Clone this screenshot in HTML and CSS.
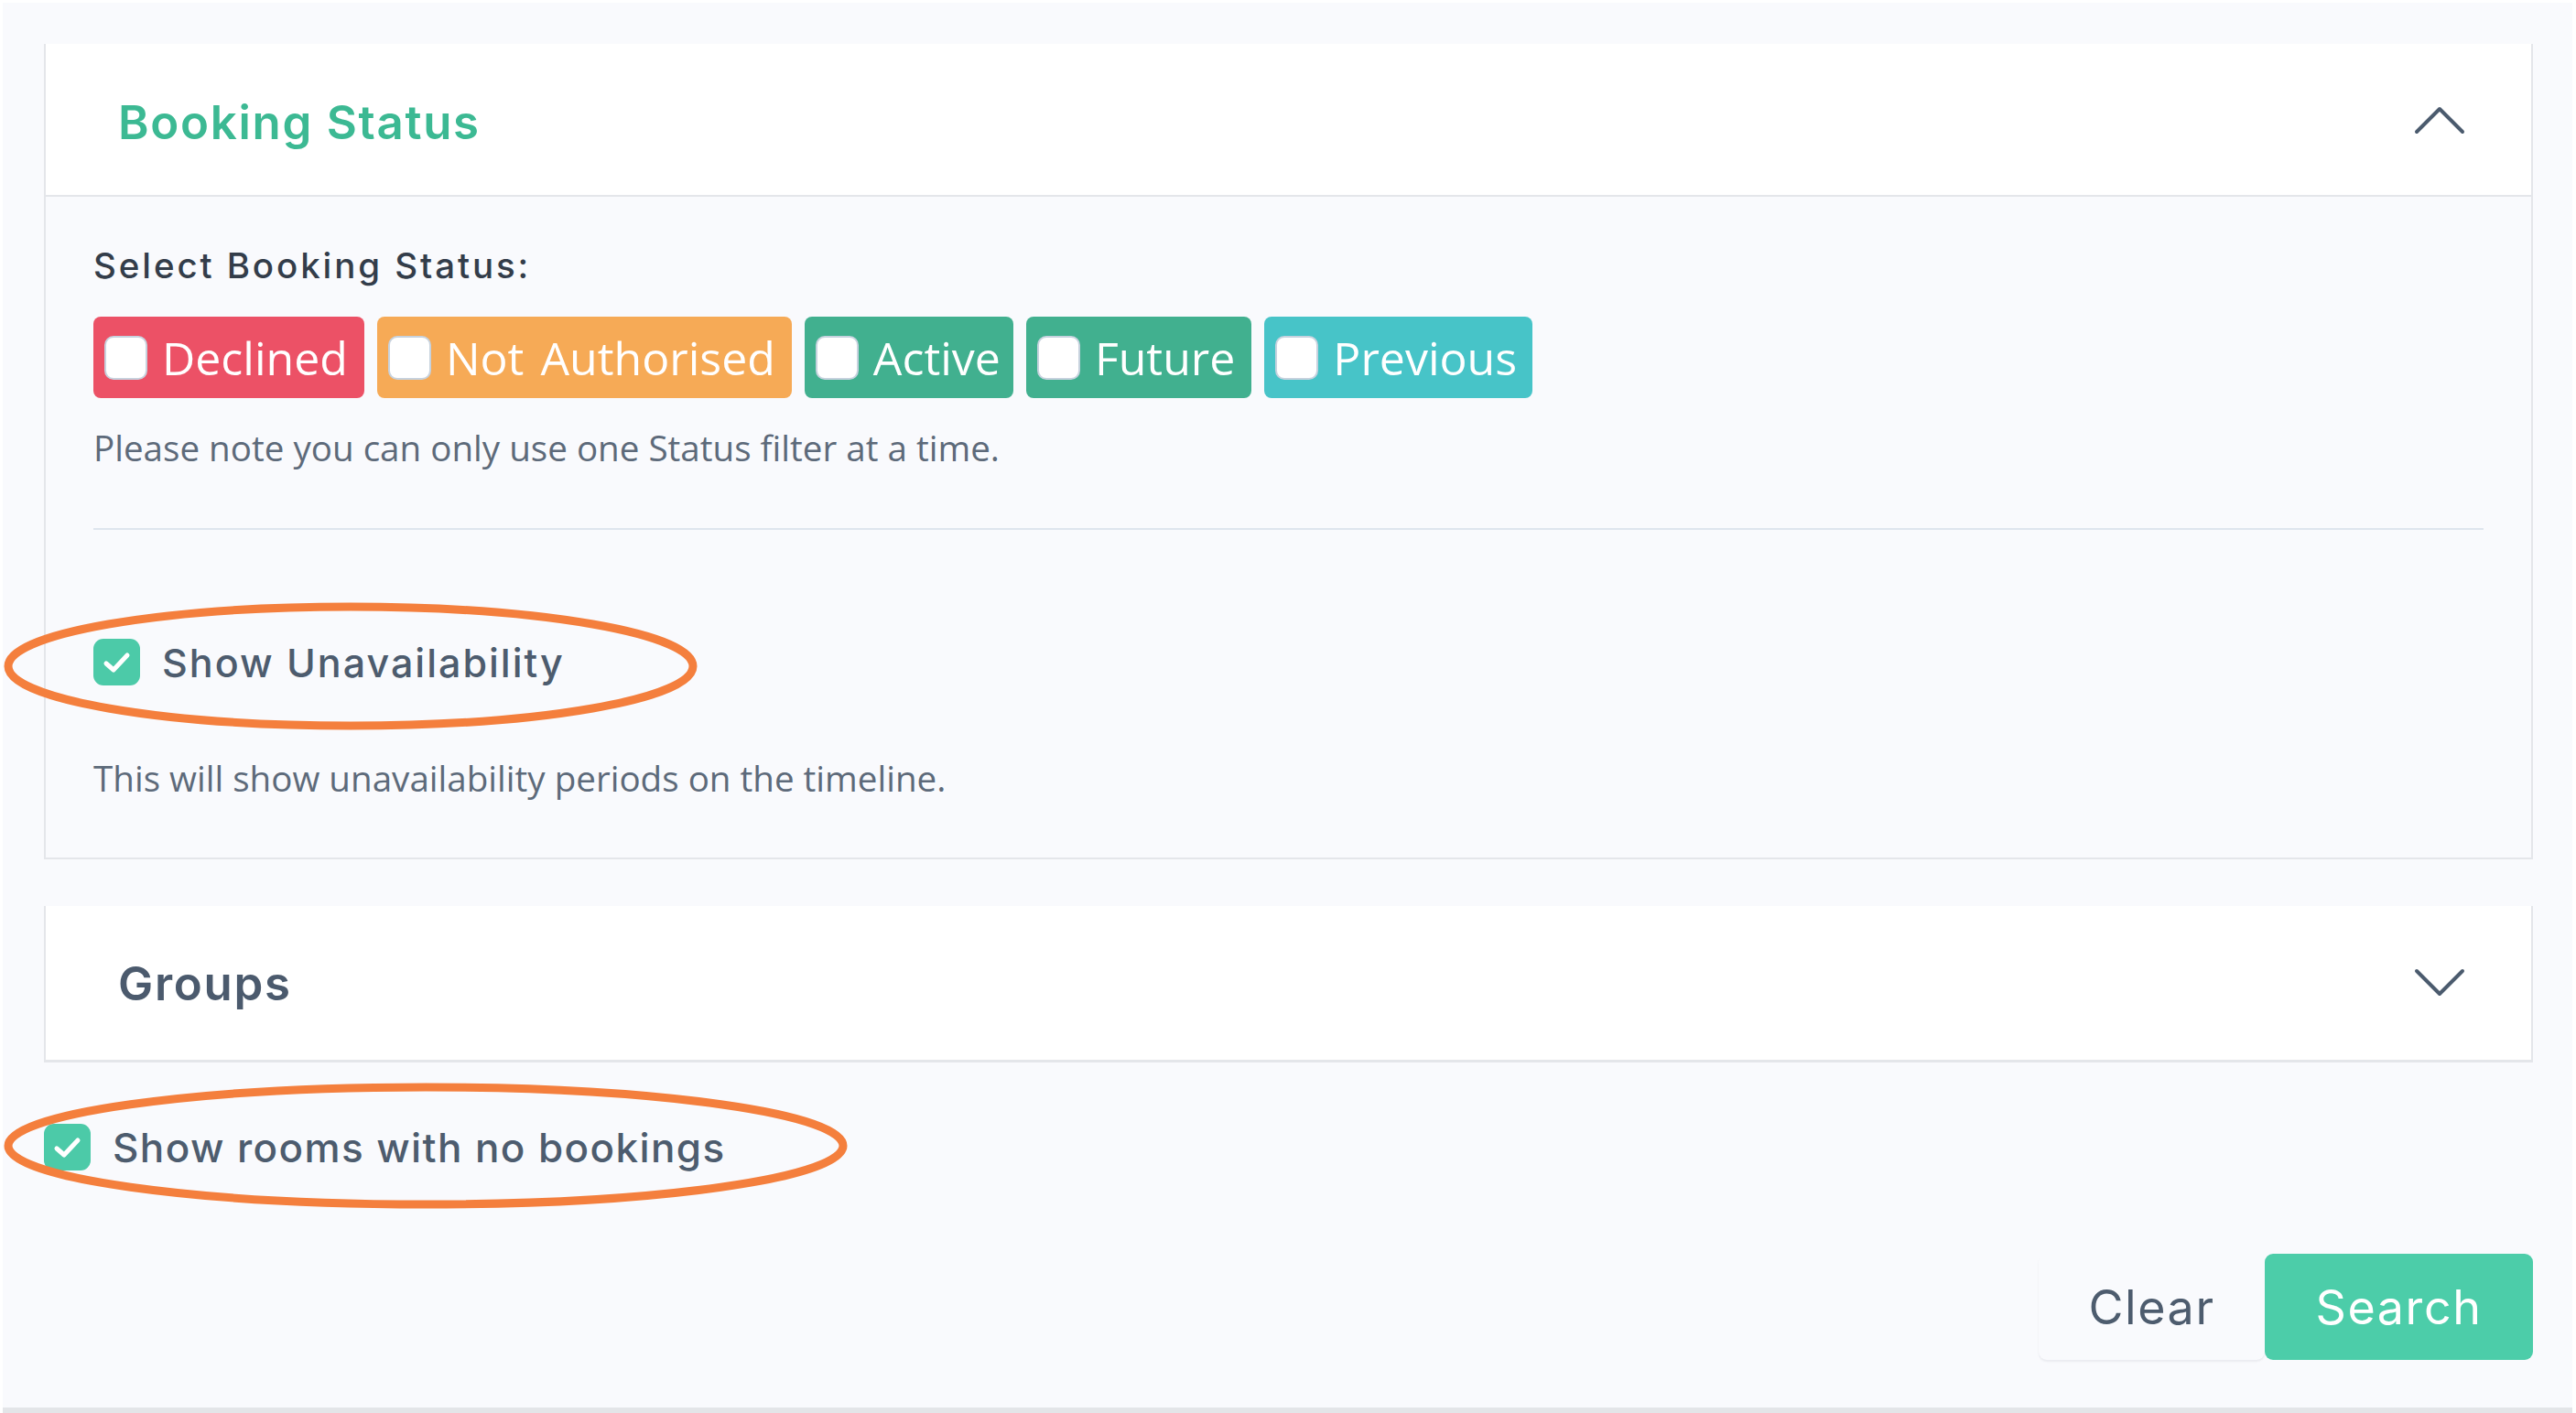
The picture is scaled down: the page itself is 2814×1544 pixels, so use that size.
FILE: index.html
```html
<!DOCTYPE html>
<html lang="en">
<head>
<meta charset="utf-8">
<title>Search filters</title>
<link rel="stylesheet" href="styles.css">
</head>
<body>
<div class="page">
  <section class="panel">
    <header class="panel-head">
      <h2 class="panel-title panel-title-open">Booking Status</h2>
      <svg class="chevron" viewBox="0 0 56 32" aria-hidden="true"><polyline points="3,29 28,4 53,29"/></svg>
    </header>
    <div class="panel-body">
      <p class="field-label">Select Booking Status:</p>
      <div class="status-list">
        <label class="status status-declined"><span class="status-box"></span>Declined</label>
        <label class="status status-pending"><span class="status-box"></span>Not Authorised</label>
        <label class="status status-active"><span class="status-box"></span>Active</label>
        <label class="status status-future"><span class="status-box"></span>Future</label>
        <label class="status status-previous"><span class="status-box"></span>Previous</label>
      </div>
      <p class="hint hint-status">Please note you can only use one Status filter at a time.</p>
      <hr class="divider">
      <label class="check check-unavailability">
        <span class="check-box"><svg viewBox="0 0 51 51" aria-hidden="true"><polyline points="14,27 22,34 37,18"/></svg></span>
        Show Unavailability
      </label>
      <p class="hint hint-unavailability">This will show unavailability periods on the timeline.</p>
    </div>
  </section>

  <section class="panel panel-closed">
    <header class="panel-head">
      <h2 class="panel-title">Groups</h2>
      <svg class="chevron" viewBox="0 0 56 32" aria-hidden="true"><polyline points="3,3 28,28 53,3"/></svg>
    </header>
  </section>

  <label class="check check-empty-rooms">
    <span class="check-box"><svg viewBox="0 0 51 51" aria-hidden="true"><polyline points="14,27 22,34 37,18"/></svg></span>
    Show rooms with no bookings
  </label>

  <div class="actions">
    <button class="btn btn-clear" type="button">Clear</button>
    <button class="btn btn-search" type="button">Search</button>
  </div>

  <svg class="marks" viewBox="0 0 2807 1535" aria-hidden="true">
    <ellipse cx="380" cy="725" rx="374" ry="65"/>
    <ellipse cx="462" cy="1249" rx="456" ry="64"/>
  </svg>
</div>
</body>
</html>
```

FILE: styles.css
```css
* { box-sizing: border-box; }

html, body {
  margin: 0;
  padding: 0;
  background: #ffffff;
}

.page {
  position: relative;
  margin: 3px 4px 0 3px;
  height: 1541px;
  padding: 45px 43px 0 45px;
  background: #f9fafd;
  border-bottom: 6px solid #e3e5e8;
  font-family: "Inter", "Noto Sans", sans-serif;
  color: #4d5c6e;
}

/* collapsible panels */
.panel {
  border: 2px solid #e4e6ea;
  border-top: 0;
  background: #f9fafd;
}

.panel-head {
  height: 167px;
  display: flex;
  align-items: center;
  justify-content: space-between;
  padding: 0 72px 0 79px;
  background: #ffffff;
  border-bottom: 2px solid #e4e6ea;
}

.panel-closed {
  margin-top: 51px;
  border-bottom-width: 3px;
}

.panel-closed .panel-head {
  border-bottom: 0;
  height: 168px;
}

.panel-title {
  margin: 0;
  font-size: 51px;
  font-weight: 600;
  letter-spacing: 1.7px;
  color: #4b5a6d;
}

.panel-title-open {
  color: #3cb993;
  padding-top: 5px;
}

.chevron {
  width: 56px;
  height: 32px;
  fill: none;
  stroke: #4b5b6e;
  stroke-width: 4;
  stroke-linecap: round;
  stroke-linejoin: round;
}

.panel-body {
  padding: 53px 52px 60px 52px;
}

.field-label {
  margin: 0;
  font-size: 38.5px;
  line-height: 45px;
  font-weight: 500;
  letter-spacing: 2.9px;
  color: #333d4a;
}

/* booking status toggles */
.status-list {
  display: flex;
  gap: 14px;
  margin-top: 33px;
}

.status {
  display: inline-flex;
  align-items: center;
  gap: 16px;
  height: 89px;
  padding: 0 18px 0 12px;
  border-radius: 8px;
  font-family: "Open Sans", sans-serif;
  font-size: 50px;
  word-spacing: 5px;
  color: #ffffff;
}

.status-box {
  width: 47px;
  height: 48px;
  border-radius: 10px;
  background: #ffffff;
  border: 2px solid #c7d2de;
}

.status-declined { background: #ec5166; }
.status-pending  { background: #f6aa56; }
.status-active   { background: #41b08f; padding-right: 14px; }
.status-future   { background: #41b08f; }
.status-previous { background: #47c4c8; padding-right: 17px; }

.hint {
  margin: 0;
  font-family: "Open Sans", sans-serif;
  font-size: 38.6px;
  line-height: 53px;
  color: #5d6a7a;
}

.hint-status { margin-top: 28px; }

.divider {
  margin: 61px 0 0;
  border: 0;
  height: 2px;
  background: #dee5ee;
}

/* checked checkboxes */
.check {
  display: flex;
  align-items: center;
  gap: 24px;
  font-size: 43px;
  font-weight: 500;
  letter-spacing: 2px;
  color: #4d5c6e;
}

.check-box {
  width: 51px;
  height: 51px;
  border-radius: 11px;
  background: #4ccaa8;
  display: flex;
}

.check-box svg {
  width: 51px;
  height: 51px;
  fill: none;
  stroke: #ffffff;
  stroke-width: 5;
  stroke-linecap: round;
  stroke-linejoin: round;
}

.check-unavailability {
  margin-top: 119px;
  height: 51px;
}

.hint-unavailability { margin-top: 75px; }

.check-empty-rooms {
  margin-top: 67px;
  height: 51px;
  font-size: 44px;
  letter-spacing: 1.4px;
}

/* footer buttons */
.actions {
  display: flex;
  justify-content: flex-end;
  margin-top: 91px;
}

.btn {
  height: 116px;
  border: 0;
  border-radius: 9px;
  font-family: "Inter", "Noto Sans", sans-serif;
  font-size: 52px;
  font-weight: 400;
  letter-spacing: 1.6px;
  cursor: pointer;
}

.btn-clear {
  width: 247px;
  background: #f9fafd;
  color: #4d5c6e;
  box-shadow: 0 2px 2px rgba(60, 70, 90, 0.08);
}

.btn-search {
  width: 293px;
  background: #4ccda9;
  color: #ffffff;
}

/* annotation rings drawn over the form */
.marks {
  position: absolute;
  left: 0;
  top: 0;
  width: 2807px;
  height: 1535px;
  pointer-events: none;
  fill: none;
  stroke: #f47f3d;
  stroke-width: 9;
}
```
